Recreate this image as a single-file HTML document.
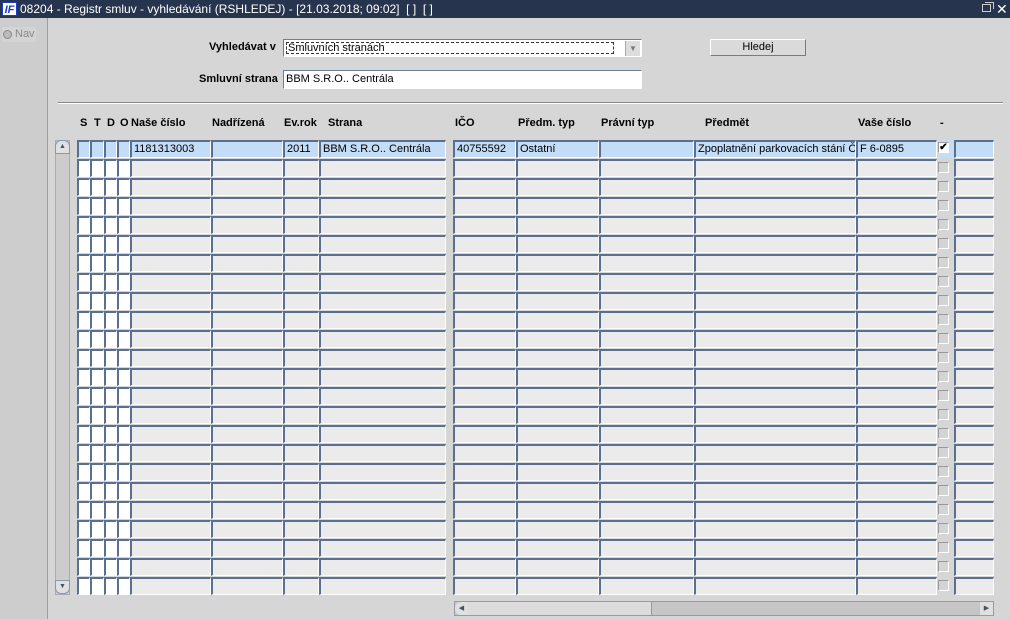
<!DOCTYPE html>
<html><head><meta charset="utf-8"><style>
*{margin:0;padding:0;box-sizing:border-box}
body{width:1010px;height:619px;background:#d6d6d6;font-family:"Liberation Sans",Arial,sans-serif;font-size:11px;position:relative;overflow:hidden;color:#000}
.a{position:absolute}
#tb{left:0;top:0;width:1010px;height:18px;background:#26344e;color:#fff;font-size:12px;line-height:18px}
#lp{left:0;top:18px;width:48px;height:601px;background:#cdcdcd;border-right:1px solid #8fa2bd}
.c{position:absolute;height:18px;background:#ebebeb;border-top:2px solid #5b6f8e;border-left:2px solid #5b6f8e;border-right:1px solid #fff;border-bottom:1px solid #fff;line-height:15px;padding-left:2px;white-space:nowrap;overflow:hidden}
.w{background:#fff}
.s{background:#c3ddf7}
.h{position:absolute;top:117px;font-weight:bold;font-size:11px}
.cb{position:absolute;width:11px;height:11px;background:#d4d4d4;border:1px solid #999;border-color:#999 #fff #fff #999}
</style></head><body>
<div id="tb" class="a"><span class="a" style="left:2px;top:2px;width:15px;height:14px;background:#fff;color:#1a3cc8;font-weight:bold;font-style:italic;font-size:11px;line-height:14px;text-align:center;border:1px solid #1a3cc8">IF</span><span class="a" style="left:20px;top:0">08204 - Registr smluv - vyhledávání (RSHLEDEJ) - [21.03.2018; 09:02]&nbsp; [ ]&nbsp; [ ]</span>
<span class="a" style="left:982px;top:4px;width:9px;height:8px;border:1px solid #ccc"></span><span class="a" style="left:985px;top:2px;width:9px;height:7px;border-top:1px solid #ccc;border-right:1px solid #ccc"></span>
<span class="a" style="left:996px;top:0;font-size:14px;color:#fff">✕</span></div>
<div id="lp" class="a"><div class="a" style="left:2px;top:9px;width:34px;height:15px;background:#d4d4d4;color:#8a8a8a;line-height:14px;padding-left:13px">Nav</div><div class="a" style="left:3px;top:12px;width:9px;height:9px;border-radius:50%;background:#bbb;border:1px solid #888"></div></div>
<div class="h" style="top:41px;left:209px">Vyhledávat v</div>
<div class="a" style="left:283px;top:39px;width:359px;height:18px;background:#fff;border:1px solid #6c7d96;border-color:#6c7d96 #fff #fff #6c7d96"><div class="a" style="left:2px;top:2px;width:328px;height:12px;border:1px dashed #333;line-height:10px;padding-left:1px">Smluvních stranách</div><div class="a" style="left:341px;top:1px;width:15px;height:15px;background:#ddd;border-left:1px solid #aaa;color:#778;font-size:8px;text-align:center;line-height:15px">▼</div></div>
<div class="a" style="left:710px;top:39px;width:96px;height:17px;border:1px solid #6c7d96;border-color:#fff #6c7d96 #6c7d96 #fff;text-align:center;line-height:15px;background:#dadada">Hledej</div>
<div class="h" style="top:73px;left:199px">Smluvní strana</div>
<div class="a" style="left:283px;top:70px;width:359px;height:19px;background:#fff;border:1px solid #6c7d96;border-color:#6c7d96 #fff #fff #6c7d96;line-height:17px;padding-left:2px">BBM S.R.O.. Centrála</div>
<div class="a" style="left:58px;top:102px;width:945px;height:2px;border-top:1px solid #888;border-bottom:1px solid #fff"></div>
<div class="h" style="left:80px">S</div><div class="h" style="left:94px">T</div><div class="h" style="left:107px">D</div><div class="h" style="left:120px">O</div>
<div class="h" style="left:131px">Naše číslo</div><div class="h" style="left:212px">Nadřízená</div><div class="h" style="left:284px">Ev.rok</div><div class="h" style="left:328px">Strana</div><div class="h" style="left:455px">IČO</div><div class="h" style="left:518px">Předm. typ</div><div class="h" style="left:601px">Právní typ</div><div class="h" style="left:705px">Předmět</div><div class="h" style="left:858px">Vaše číslo</div><div class="h" style="left:940px">-</div>
<div class="a" style="left:55px;top:140px;width:15px;height:455px;background:#cccccc;border:1px solid #aab"></div>
<div class="a" style="left:55px;top:140px;width:15px;height:14px;background:#e0e0e0;border:1px solid #8899aa;border-radius:6px 6px 0 0;font-size:7px;text-align:center;line-height:12px;color:#456">▲</div>
<div class="a" style="left:55px;top:580px;width:15px;height:14px;background:#e0e0e0;border:1px solid #8899aa;border-radius:0 0 6px 6px;font-size:7px;text-align:center;line-height:12px;color:#456">▼</div>
<div class="a" style="left:454px;top:601px;width:540px;height:15px;background:#c6c6c6;border:1px solid #99a"></div>
<div class="a" style="left:455px;top:602px;width:13px;height:13px;background:#e0e0e0;border-radius:6px 0 0 6px;font-size:7px;line-height:13px;color:#456;text-align:center">◀</div>
<div class="a" style="left:468px;top:602px;width:184px;height:13px;background:#dcdcdc;border-right:1px solid #999"></div>
<div class="a" style="left:980px;top:602px;width:13px;height:13px;background:#e0e0e0;font-size:7px;line-height:13px;color:#456;text-align:center">▶</div>
<div id="g"></div>
<script>
var cols=[[77,13,1],[90,14,1],[104,13,1],[117,13,1],[130,81],[211,72],[283,36],[319,127],[453,63],[516,83],[599,95],[694,162],[856,81],[954,40]];
var h='';
for(var r=0;r<24;r++){var y=140+r*19;
for(var i=0;i<cols.length;i++){var c=cols[i];var cls='c'+(c[2]?' w':(r==0?' s':''));
var t='';if(r==0){t=['','','','','1181313003','','2011','BBM S.R.O.. Centrála','40755592','Ostatní','','Zpoplatnění parkovacích stání ČV','F 6-0895',''][i];}
if(r==0&&c[2])cls='c s';
h+='<div class="'+cls+'" style="left:'+c[0]+'px;top:'+y+'px;width:'+c[1]+'px">'+t+'</div>';}
if(r==0)h+='<div class="a" style="left:937px;top:140px;width:17px;height:18px;background:#c3ddf7"></div><div class="cb" style="left:938px;top:142px;background:#fff;font-size:10px;line-height:9px;text-align:center;font-weight:bold">✔</div>';
else h+='<div class="cb" style="left:938px;top:'+(y+3)+'px"></div>';}
document.getElementById('g').innerHTML=h;
</script>
</body></html>
